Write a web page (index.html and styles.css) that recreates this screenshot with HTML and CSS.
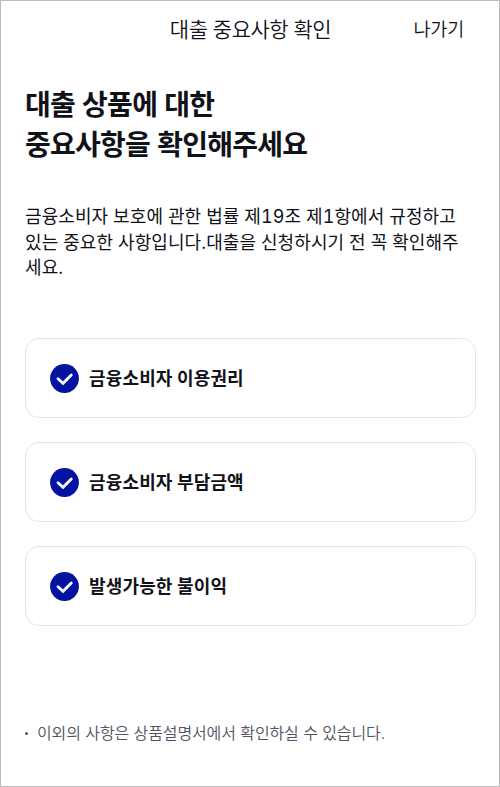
FILE: index.html
```
<!DOCTYPE html>
<html lang="ko">

<head>
    <meta charset="UTF-8">
    <meta name="viewport" content="width=device-width, initial-scale=1.0">
    <title>대출 중요사항 확인</title>
    <link rel="stylesheet" href="styles.css">
</head>

<body>
    <div class="container">
        <header class="header">
            <span class="header-title">대출 중요사항 확인</span>
            <a class="exit" href="#">나가기</a>
        </header>

        <h1 class="title">대출 상품에 대한<br>중요사항을 확인해주세요</h1>

        <p class="description">
            <span class="line">금융소비자 보호에 관한 법률 제19조 제1항에서 규정하고</span>
            <span class="line">있는 중요한 사항입니다.대출을 신청하시기 전 꼭 확인해주</span>
            <span class="line">세요.</span>
        </p>

        <ul class="check-list">
            <li class="check-item">
                <svg class="check-icon" viewBox="0 0 29 29">
                    <circle cx="14.5" cy="14.5" r="14.4" />
                    <path d="M8 14.7l5 4.5 8.3-8.3" />
                </svg>
                <span class="check-text">금융소비자 이용권리</span>
            </li>
            <li class="check-item">
                <svg class="check-icon" viewBox="0 0 29 29">
                    <circle cx="14.5" cy="14.5" r="14.4" />
                    <path d="M8 14.7l5 4.5 8.3-8.3" />
                </svg>
                <span class="check-text">금융소비자 부담금액</span>
            </li>
            <li class="check-item">
                <svg class="check-icon" viewBox="0 0 29 29">
                    <circle cx="14.5" cy="14.5" r="14.4" />
                    <path d="M8 14.7l5 4.5 8.3-8.3" />
                </svg>
                <span class="check-text">발생가능한 불이익</span>
            </li>
        </ul>

        <p class="notice"><span class="dot"></span><span class="notice-text">이외의 사항은 상품설명서에서 확인하실 수 있습니다.</span></p>
    </div>
</body>

</html>
```

FILE: styles.css
```
* {
    box-sizing: border-box;
}

body {
    margin: 0;
    background-color: #fff;
    color: #10121a;
    font-family: Inter, "Noto Sans CJK KR", sans-serif;
}

.container {
    height: 787px;
    padding: 0 23px 0 24px;
    border: 1px solid #bbb;
    overflow: hidden;
}

.header {
    display: grid;
    grid-template-columns: 1fr auto 1fr;
    align-items: center;
    height: 54px;
}

.header-title {
    grid-column: 2;
    font-size: 21px;
    font-weight: 350;
    letter-spacing: -0.5px;
}

.exit {
    justify-self: end;
    margin-right: 12px;
    color: inherit;
    font-size: 18.5px;
    font-weight: 350;
    letter-spacing: -0.2px;
    text-decoration: none;
}

.title {
    margin: 28px 0 0;
    font-family: "Noto Sans CJK KR", sans-serif;
    font-size: 28px;
    font-weight: 700;
    line-height: 40px;
    letter-spacing: -0.75px;
    white-space: nowrap;
}

.description {
    margin: 41px 0 0;
    font-size: 18px;
    font-weight: 400;
    line-height: 25.5px;
    letter-spacing: 0.08px;
    font-variant-numeric: tabular-nums;
}

.line {
    display: block;
    white-space: nowrap;
}

.check-list {
    display: flex;
    flex-direction: column;
    gap: 24px;
    margin: 57.5px 0 0;
    padding: 0;
    list-style: none;
}

.check-item {
    display: flex;
    align-items: center;
    gap: 10px;
    height: 80px;
    padding-left: 24px;
    border: 1px solid #e4e4e6;
    border-radius: 14px;
    font-size: 18px;
    font-weight: 700;
    letter-spacing: 0.15px;
}

.check-text {
    padding-bottom: 3px;
}

.check-icon {
    width: 29px;
    height: 29px;
}

.check-icon circle {
    fill: #0514a0;
}

.check-icon path {
    fill: none;
    stroke: #fff;
    stroke-width: 2.8;
    stroke-linecap: round;
}

.notice {
    display: flex;
    align-items: center;
    margin: 94px 0 0;
    color: #4f5661;
    font-size: 16px;
    font-weight: 350;
    line-height: 26px;
    letter-spacing: -0.1px;
    white-space: nowrap;
}

.dot {
    width: 3px;
    height: 3px;
    margin-right: 9px;
    border-radius: 50%;
    background-color: #4f5661;
}
```
